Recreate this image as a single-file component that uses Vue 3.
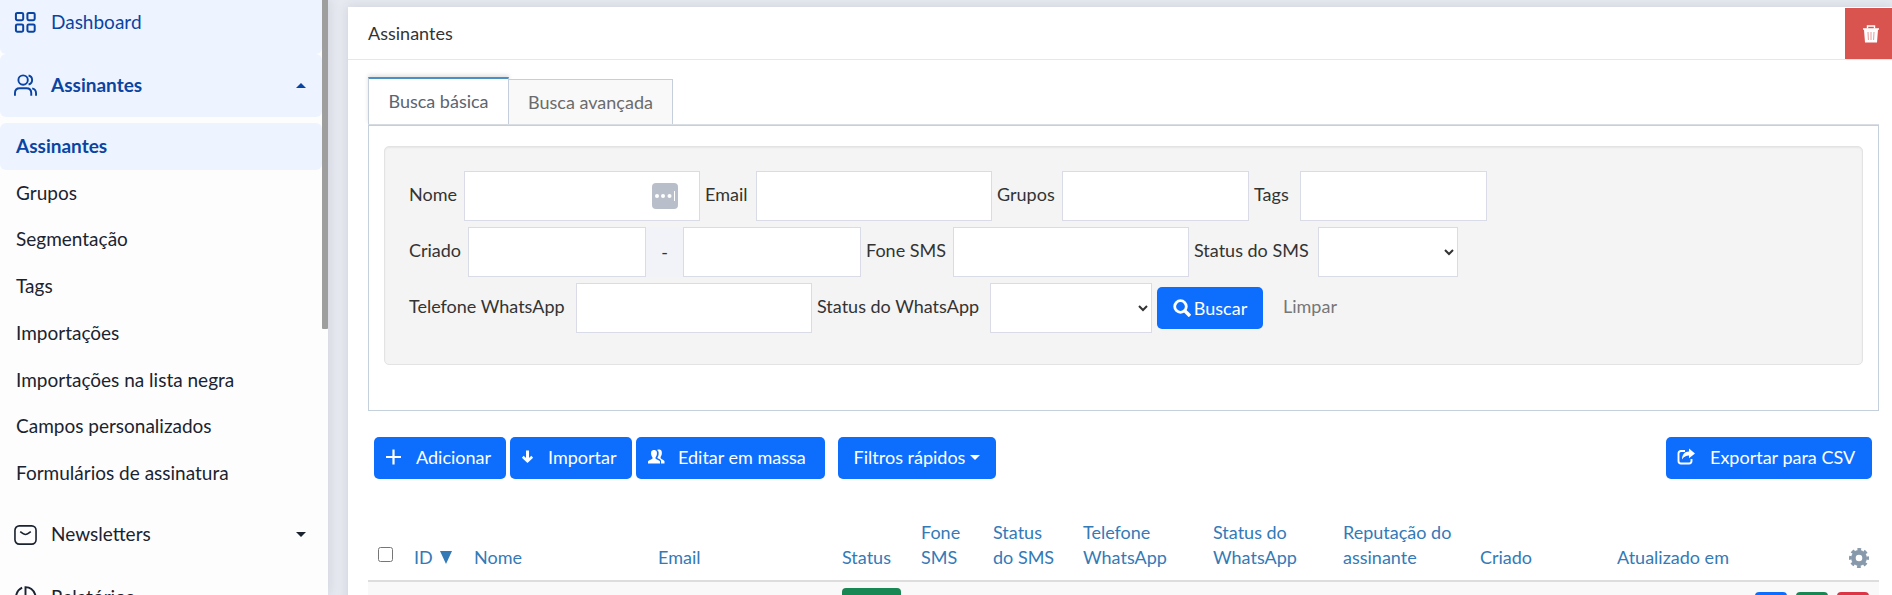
<script setup>
import { ref } from 'vue'

const submenu = [
  'Assinantes',
  'Grupos',
  'Segmentação',
  'Tags',
  'Importações',
  'Importações na lista negra',
  'Campos personalizados',
  'Formulários de assinatura'
]
const columns = [
  { lines: ['Nome'], cls: 'c-name' },
  { lines: ['Email'], cls: 'c-name' },
  { lines: ['Status'], cls: 'c-status' },
  { lines: ['Fone', 'SMS'], cls: 'c-phone' },
  { lines: ['Status', 'do SMS'], cls: 'c-sms' },
  { lines: ['Telefone', 'WhatsApp'], cls: 'c-wa' },
  { lines: ['Status do', 'WhatsApp'], cls: 'c-wa' },
  { lines: ['Reputação do', 'assinante'], cls: 'c-date' },
  { lines: ['Criado'], cls: 'c-date' },
  { lines: ['Atualizado em'], cls: 'c-date' }
]
const tab = ref('basic')
</script>

<template>
  <div class="layout">
    <aside class="sidebar">
      <nav class="nav">
        <a href="#" class="item on first">
          <svg class="ico" viewBox="0 0 24 24" fill="none" stroke="currentColor" stroke-width="2.1">
            <rect x="2" y="2" width="7.6" height="7.6" rx="1.4" />
            <rect x="14" y="2" width="7.6" height="7.6" rx="1.4" />
            <rect x="2" y="14" width="7.6" height="7.6" rx="1.4" />
            <rect x="14" y="14" width="7.6" height="7.6" rx="1.4" />
          </svg>
          <span>Dashboard</span>
        </a>
        <a href="#" class="item on bold">
          <svg class="ico" viewBox="0 0 24 24" fill="none" stroke="currentColor" stroke-width="2">
            <circle cx="9.5" cy="6.3" r="4.9" />
            <path d="M15.2 1.6c2.3.5 3.7 2.4 3.7 4.7s-1.4 4.2-3.7 4.7" />
            <path d="M1 22.8v-3c0-3 2-5 5-5h7c3 0 5 2 5 5v3" />
            <path d="M19 15c2.5.6 4 2.5 4 5v2.8" />
          </svg>
          <span>Assinantes</span>
          <svg class="caret" viewBox="0 0 10 5"><path d="M0 5L5 0L10 5Z" fill="currentColor" /></svg>
        </a>
        <div class="sub">
          <a v-for="(s, i) in submenu" :key="s" href="#" class="subitem" :class="{ active: i === 0 }">{{ s }}</a>
        </div>
        <a href="#" class="item">
          <svg class="ico" viewBox="0 0 24 24" fill="none" stroke="currentColor" stroke-width="1.7">
            <rect x="1" y="3" width="22" height="19" rx="4.5" />
            <path d="M6.5 9c3 2.4 4 3 5.5 3s2.5-.6 5.5-3" />
          </svg>
          <span>Newsletters</span>
          <svg class="caret" viewBox="0 0 10 5"><path d="M0 0L5 5L10 0Z" fill="currentColor" /></svg>
        </a>
        <a href="#" class="item">
          <svg class="ico" viewBox="0 0 24 24" fill="none" stroke="currentColor" stroke-width="2">
            <path d="M8.5 1.7A10.8 10.8 0 1 0 19 20.5" />
            <path d="M12 12V1.2A11 11 0 0 1 19 20.3Z" />
          </svg>
          <span>Relatórios</span>
        </a>
      </nav>
      <div class="thumb"></div>
    </aside>

    <main class="main">
      <section class="card">
        <header class="head">
          <h1>Assinantes</h1>
          <button type="button" class="trash" aria-label="Excluir">
            <svg viewBox="0 0 18 18" fill="none">
              <path d="M5.5 3.5V1h7v2.5" stroke="#fff" stroke-width="1.4" />
              <path fill="#fff" d="M1 3.2h16v1.6h-1L15 17.500H3L2 4.800H1Z" />
              <path d="M6 7l.4 8M9 7v8M12 7l-.4 8" stroke="#e49a97" stroke-width="1" />
            </svg>
          </button>
        </header>

        <div class="body">
          <div class="tabs" role="tablist">
            <button type="button" role="tab" class="tab" :class="{ current: tab === 'basic' }" @click="tab = 'basic'">Busca básica</button>
            <button type="button" role="tab" class="tab wide" :class="{ current: tab === 'adv' }" @click="tab = 'adv'">Busca avançada</button>
          </div>
          <div class="pane">
            <form class="well" @submit.prevent>
              <div class="row">
                <label for="nome" class="l-nome">Nome</label>
                <div class="field long">
                  <input id="nome" type="text" />
                  <svg class="filler" viewBox="0 0 26 26">
                    <rect width="26" height="26" rx="4" fill="#b9bfca" />
                    <g fill="#fff">
                      <circle cx="5" cy="13" r="2" />
                      <circle cx="11" cy="13" r="2" />
                      <circle cx="17.5" cy="13" r="2" />
                      <rect x="22" y="8" width="1" height="10" />
                    </g>
                  </svg>
                </div>
                <label for="email" class="l-email">Email</label>
                <div class="field long"><input id="email" type="text" /></div>
                <label for="grupos" class="l-grupos">Grupos</label>
                <div class="field mid"><input id="grupos" type="text" /></div>
                <label for="tags" class="l-tags">Tags</label>
                <div class="field mid"><input id="tags" type="text" /></div>
              </div>
              <div class="row">
                <label for="criado" class="l-criado">Criado</label>
                <div class="field date"><input id="criado" type="text" /></div>
                <span class="dash">-</span>
                <div class="field date"><input type="text" aria-label="Criado até" /></div>
                <label for="fone" class="l-fone">Fone SMS</label>
                <div class="field long"><input id="fone" type="text" /></div>
                <label for="stsms" class="l-stsms">Status do SMS</label>
                <div class="field sel"><select id="stsms"><option></option></select></div>
              </div>
              <div class="row">
                <label for="tel" class="l-tel">Telefone WhatsApp</label>
                <div class="field long"><input id="tel" type="text" /></div>
                <label for="stwa" class="l-stwa">Status do WhatsApp</label>
                <div class="field selw"><select id="stwa"><option></option></select></div>
                <button type="submit" class="btn search">
                  <svg viewBox="0 0 18 18" fill="none" stroke="#fff">
                    <circle cx="7.5" cy="7.5" r="5.8" stroke-width="2.8" />
                    <path d="M12 12l5 5" stroke-width="3.4" />
                  </svg>
                  <span>Buscar</span>
                </button>
                <a href="#" class="clear">Limpar</a>
              </div>
            </form>
          </div>

          <div class="toolbar">
            <button type="button" class="btn b-add">
              <svg viewBox="0 0 18 18" stroke="#fff" stroke-width="2.2"><path d="M8.5 1.500v15M1 9h15" /></svg>
              <span>Adicionar</span>
            </button>
            <button type="button" class="btn b-imp">
              <svg class="narrow" viewBox="0 0 14 18" fill="none" stroke="#fff"><path d="M6.500 2.500v10" stroke-width="3" /><path d="M1.800 8.800L6.500 13.200L11.200 8.800" stroke-width="2.600" /></svg>
              <span>Importar</span>
            </button>
            <button type="button" class="btn b-edit">
              <svg viewBox="0 0 18 18" fill="#fff">
                <path d="M1 15.500v-2c0-1 3.500-2 4.500-3v-1C4 7.500 3.800 5 4.300 3.400C5 1.400 9 1.400 9.700 3.400c.5 1.600.3 4.100-1.200 6.100v1c1 1 4.500 2 4.500 3v2Z" />
                <path d="M10 2c2-.8 4.300-.4 4.700 1.600c.4 1.700.2 3.700-1.100 5.400v1.200c.8.9 3.900 1.800 3.900 3v2.300h-3.500v-2.600c0-1.200-2-2-3.600-2.900v-.6c1.500-2 1.600-4.800.8-6.500Z" />
              </svg>
              <span>Editar em massa</span>
            </button>
            <button type="button" class="btn b-filter">
              <span>Filtros rápidos</span>
              <svg class="small" viewBox="0 0 10 5"><path d="M0 0L5 5L10 0Z" fill="#fff" /></svg>
            </button>
            <button type="button" class="btn b-export">
              <svg viewBox="0 0 18 18" fill="none" stroke="#fff" stroke-width="1.9">
                <path d="M8 3H4Q1.500 3 1.500 5.500V13Q1.500 15.500 4 15.500H12Q14.500 15.500 14.500 13V11" />
                <path d="M12 .5L18 5.500L12 10.200V7.500C9 7.500 7 8.500 5 11.500C5 7 7.500 3.500 12 3.500Z" fill="#fff" stroke="none" />
              </svg>
              <span>Exportar para CSV</span>
            </button>
          </div>

          <table class="grid">
            <thead>
              <tr>
                <th class="c-check"><input type="checkbox" aria-label="Selecionar todos" /></th>
                <th class="c-id">
                  <a href="#">ID <svg class="sort" viewBox="0 0 12 13"><path d="M0 0H12L6 13Z" fill="currentColor" /></svg></a>
                </th>
                <th v-for="c in columns" :key="c.lines.join()" :class="c.cls">
                  <a href="#"><span v-for="l in c.lines" :key="l" class="line">{{ l }}</span></a>
                </th>
                <th class="c-act">
                  <button type="button" class="gear" aria-label="Colunas">
                    <svg viewBox="0 0 20 20" fill="none" stroke="#8799ab">
                      <circle cx="10" cy="10" r="5.6" stroke-width="4.6" />
                      <circle cx="10" cy="10" r="8.6" stroke-width="2.8" stroke-dasharray="3.7 3.054" stroke-dashoffset="1.85" />
                    </svg>
                  </button>
                </th>
              </tr>
            </thead>
            <tbody>
              <tr>
                <td colspan="4"></td>
                <td><span class="badge"></span></td>
                <td colspan="7"></td>
                <td>
                  <div class="acts">
                    <button type="button" class="act blue" aria-label="Ver"></button>
                    <button type="button" class="act green" aria-label="Editar"></button>
                    <button type="button" class="act red" aria-label="Remover"></button>
                  </div>
                </td>
              </tr>
            </tbody>
          </table>
        </div>
      </section>
    </main>
  </div>
</template>

<style>
body {
  margin: 0;
  overflow: hidden;
}
</style>

<style scoped>
.layout {
  display: flex;
  height: 100vh;
  overflow: hidden;
  background: #e6e9f0;
  font-family: Lato, "Open Sans", sans-serif;
  font-size: 18px;
  line-height: 25px;
  color: #333;
}
.layout * {
  box-sizing: border-box;
}
a {
  text-decoration: none;
  color: inherit;
}
button, input, select {
  font: inherit;
  color: inherit;
  margin: 0;
}
button {
  border: 0;
  padding: 0;
  cursor: pointer;
}
svg {
  display: block;
  flex: none;
}

/* Sidebar */
.sidebar {
  position: relative;
  flex: none;
  width: 328px;
  background: #fdfdfd;
  color: #1b2330;
  font-size: 19px;
  overflow: hidden;
  box-shadow: 0 0 12px rgba(60, 70, 90, 0.15);
}
.nav {
  margin-right: 6px;
}
.item {
  display: flex;
  align-items: center;
  height: 63px;
  padding: 0 16px 0 14px;
  gap: 14px;
  border-radius: 6px;
}
.item span {
  padding-bottom: 2px;
}
.item.first {
  margin-top: -9px;
}
.item.on {
  background: #edf4ff;
  color: #0a44a3;
}
.item.bold {
  font-weight: 700;
}
.ico {
  width: 23px;
  height: 23px;
}
.caret {
  width: 10px;
  height: 5px;
  margin-left: auto;
}
.sub {
  display: grid;
  grid-template-rows: repeat(8, 1fr);
  height: 374px;
  margin: 6px 0;
}
.subitem {
  display: flex;
  align-items: center;
  padding: 0 0 2px 16px;
  border-radius: 6px;
}
.subitem.active {
  background: #edf4ff;
  color: #0a44a3;
  font-weight: 700;
}
.thumb {
  position: absolute;
  top: 0;
  right: 0;
  width: 6px;
  height: 329px;
  border-radius: 0 0 1px 1px;
  background: #9e9e9e;
}

/* Card */
.main {
  flex: 1;
  min-width: 0;
  padding: 7px 0 0 20px;
}
.card {
  min-height: 100%;
  background: #fff;
  box-shadow: 0 0 10px rgba(60, 70, 90, 0.15);
}
.head {
  display: flex;
  align-items: center;
  justify-content: space-between;
  height: 53px;
  padding: 1px 0 0 20px;
  border-bottom: 1px solid #e5e7ea;
}
h1 {
  margin: 0;
  font-size: 18px;
  font-weight: 400;
}
.trash {
  display: flex;
  align-items: center;
  align-self: stretch;
  justify-content: center;
  width: 47px;
  padding-left: 5px;
  background: #d9534f;
}
.trash svg {
  width: 18px;
  height: 18px;
}
.body {
  padding: 17px 13px 0 20px;
}

/* Tabs */
.tabs {
  display: flex;
  align-items: flex-end;
  border-bottom: 1px solid #d9dee5;
}
.tab {
  height: 45px;
  width: 141px;
  border: 1px solid #c5cedb;
  border-bottom: 0;
  background: #f9f9f9;
  color: #6b6b6b;
}
.tab.wide {
  width: 165px;
  margin-left: -1px;
}
.tab.current {
  height: 47px;
  border-top: 2px solid #4a90c2;
  background: #fff;
  color: #5c6470;
  box-shadow: 0 -2px 4px rgba(0, 0, 0, 0.12);
}
.pane {
  padding: 20px 15px 45px;
  border: 1px solid #c5d0dd;
}
.well {
  display: flex;
  flex-direction: column;
  gap: 6px;
  padding: 24px 24px 31px;
  border: 1px solid #e3e3e3;
  border-radius: 5px;
  background: #f4f4f4;
  box-shadow: inset 0 1px 2px rgba(0, 0, 0, 0.06);
}
.row {
  display: flex;
  align-items: center;
}
.row label {
  flex: none;
  white-space: nowrap;
  padding-bottom: 4px;
}
.field {
  position: relative;
  flex: none;
  height: 50px;
  margin-right: 5px;
}
.field input,
.field select {
  display: block;
  width: 100%;
  height: 100%;
  padding: 0 10px;
  border: 1px solid #d9dce6;
  border-radius: 0;
  background-color: #fff;
}
.field select {
  padding: 0 2px;
}
.long { width: 236px; }
.mid { width: 187px; }
.date { width: 178px; }
.sel { width: 140px; }
.selw { width: 162px; }
.l-nome { width: 55px; }
.l-email { width: 51px; }
.l-grupos { width: 65px; }
.l-tags { width: 46px; }
.l-criado { width: 59px; }
.l-fone { width: 87px; }
.l-stsms { width: 124px; }
.l-tel { width: 167px; }
.l-stwa { width: 173px; }
.filler {
  position: absolute;
  top: 12px;
  right: 22px;
  width: 26px;
  height: 26px;
}
.dash {
  width: 37px;
  height: 50px;
  margin-left: -5px;
  line-height: 50px;
  text-align: center;
  background: #f1f3f8;
}
.btn {
  display: flex;
  align-items: center;
  height: 42px;
  border-radius: 5px;
  background: #0d6efd;
  color: #fff;
  white-space: nowrap;
}
.btn svg {
  width: 18px;
  height: 18px;
}
.search {
  justify-content: center;
  gap: 3px;
  width: 106px;
}
.clear {
  margin-left: 20px;
  padding-bottom: 4px;
  color: #777;
}

/* Toolbar */
.toolbar {
  display: flex;
  gap: 4px;
  padding: 26px 7px 0 6px;
}
.toolbar .btn {
  padding: 0 0 2px 11px;
  gap: 13px;
}
.btn .narrow {
  width: 14px;
}
.b-add { width: 132px; }
.b-imp { width: 122px; }
.b-edit { width: 189px; }
.toolbar .b-filter {
  justify-content: center;
  width: 158px;
  margin-left: 9px;
  padding-left: 0;
  gap: 5px;
}
.btn .small {
  width: 10px;
  height: 5px;
}
.toolbar .b-export {
  width: 206px;
  margin-left: auto;
  gap: 15px;
}

/* Table */
.grid {
  width: 100%;
  margin-top: 31px;
  border-collapse: collapse;
  table-layout: fixed;
}
th {
  padding: 10px 0 10px 10px;
  border-bottom: 2px solid #ddd;
  color: #337ab7;
  font-weight: 400;
  text-align: left;
  vertical-align: bottom;
  white-space: nowrap;
}
.line {
  display: block;
}
.c-check { width: 36px; }
.c-id { width: 60px; }
.c-name { width: 184px; }
.c-status { width: 79px; }
.c-phone { width: 72px; }
.c-sms { width: 90px; }
.c-wa { width: 130px; }
.c-date { width: 137px; }
.c-check input {
  display: block;
  width: 15px;
  height: 15px;
  margin-bottom: 8px;
}
.sort {
  display: inline-block;
  width: 12px;
  height: 13px;
  margin-left: 3px;
}
.gear {
  display: block;
  margin: 0 10px 2px auto;
  background: none;
}
.gear svg {
  width: 20px;
  height: 20px;
}
td {
  height: 60px;
  padding: 6px 0 0 10px;
  background: #f9f9f9;
  vertical-align: top;
}
.badge {
  display: block;
  width: 59px;
  height: 26px;
  border-radius: 4px;
  background: #198754;
}
.acts {
  display: flex;
  gap: 9px;
  justify-content: flex-end;
  padding: 4px 10px 0 0;
}
.act {
  width: 32px;
  height: 30px;
  border-radius: 4px;
}
.blue { background: #0d6efd; }
.green { background: #198754; }
.red { background: #dc3545; }
</style>
